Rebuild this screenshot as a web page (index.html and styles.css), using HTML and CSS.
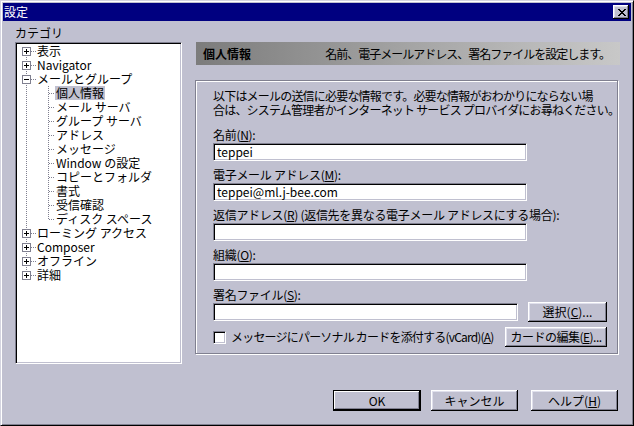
FILE: index.html
```html
<!DOCTYPE html>
<html lang="ja">
<head>
<meta charset="utf-8">
<title>設定</title>
<link rel="stylesheet" href="styles.css">
</head>
<body>
<div class="window">
  <div class="titlebar">
    <span class="title">設定</span>
    <div class="close">
      <svg width="8" height="7" viewBox="0 0 8 7" shape-rendering="crispEdges">
        <path fill="#000" d="M0 0h2v1H0zM6 0h2v1H6zM1 1h2v1H1zM5 1h2v1H5zM2 2h4v1H2zM3 3h2v1H3zM2 4h4v1H2zM1 5h2v1H1zM5 5h2v1H5zM0 6h2v1H0zM6 6h2v1H6z"/>
      </svg>
    </div>
  </div>
  <div class="body">
    <div class="main">
      <div class="left">
        <div class="cat-label">カテゴリ</div>
        <div class="tree">
          <svg class="tree-lines" width="163" height="318" viewBox="0 0 163 318" shape-rendering="crispEdges">
            <g stroke="#808090" stroke-width="1" stroke-dasharray="1 1" fill="none">
              <line x1="9.5" y1="7" x2="9.5" y2="232"/>
              <line x1="14" y1="7.5" x2="20" y2="7.5"/>
              <line x1="14" y1="21.5" x2="20" y2="21.5"/>
              <line x1="14" y1="35.5" x2="20" y2="35.5"/>
              <line x1="14" y1="189.5" x2="20" y2="189.5"/>
              <line x1="14" y1="203.5" x2="20" y2="203.5"/>
              <line x1="14" y1="217.5" x2="20" y2="217.5"/>
              <line x1="14" y1="231.5" x2="20" y2="231.5"/>
              <line x1="31.5" y1="42" x2="31.5" y2="176"/>
              <line x1="32" y1="49.5" x2="38" y2="49.5"/>
              <line x1="32" y1="63.5" x2="38" y2="63.5"/>
              <line x1="32" y1="77.5" x2="38" y2="77.5"/>
              <line x1="32" y1="91.5" x2="38" y2="91.5"/>
              <line x1="32" y1="105.5" x2="38" y2="105.5"/>
              <line x1="32" y1="119.5" x2="38" y2="119.5"/>
              <line x1="32" y1="133.5" x2="38" y2="133.5"/>
              <line x1="32" y1="147.5" x2="38" y2="147.5"/>
              <line x1="32" y1="161.5" x2="38" y2="161.5"/>
              <line x1="32" y1="175.5" x2="38" y2="175.5"/>
            </g>
          </svg>
          <div class="row"><span class="exp plus"></span><span class="label">表示</span></div>
          <div class="row"><span class="exp plus"></span><span class="label">Navigator</span></div>
          <div class="row"><span class="exp minus"></span><span class="label">メールとグループ</span></div>
          <div class="row child"><span class="label selected">個人情報</span></div>
          <div class="row child"><span class="label">メール サーバ</span></div>
          <div class="row child"><span class="label">グループ サーバ</span></div>
          <div class="row child"><span class="label">アドレス</span></div>
          <div class="row child"><span class="label">メッセージ</span></div>
          <div class="row child"><span class="label">Window の設定</span></div>
          <div class="row child"><span class="label">コピーとフォルダ</span></div>
          <div class="row child"><span class="label">書式</span></div>
          <div class="row child"><span class="label">受信確認</span></div>
          <div class="row child"><span class="label">ディスク スペース</span></div>
          <div class="row"><span class="exp plus"></span><span class="label">ローミング アクセス</span></div>
          <div class="row"><span class="exp plus"></span><span class="label">Composer</span></div>
          <div class="row"><span class="exp plus"></span><span class="label">オフライン</span></div>
          <div class="row"><span class="exp plus"></span><span class="label">詳細</span></div>
        </div>
      </div>
      <div class="right">
        <div class="header">
          <span class="header-title">個人情報</span>
          <span class="header-desc">名前、電子メールアドレス、署名ファイルを設定します。</span>
        </div>
        <div class="group">
          <div class="desc">以下はメールの送信に必要な情報です。必要な情報がおわかりにならない場<br>合は、システム管理者かインターネット サービス プロバイダにお尋ねください。</div>
          <div class="field">
            <div class="flabel">名前(<u>N</u>):</div>
            <div class="input">teppei</div>
          </div>
          <div class="field">
            <div class="flabel">電子メール アドレス(<u>M</u>):</div>
            <div class="input">teppei@ml.j-bee.com</div>
          </div>
          <div class="field">
            <div class="flabel">返信アドレス(<u>R</u>) (返信先を異なる電子メール アドレスにする場合):</div>
            <div class="input"></div>
          </div>
          <div class="field">
            <div class="flabel">組織(<u>O</u>):</div>
            <div class="input"></div>
          </div>
          <div class="field">
            <div class="flabel">署名ファイル(<u>S</u>):</div>
            <div class="input-row">
              <div class="input short"></div>
              <div class="btn btn-choose">選択(<u>C</u>)...</div>
            </div>
          </div>
          <div class="check-row">
            <span class="checkbox"></span>
            <span class="check-label">メッセージにパーソナル カードを添付する(vCard)(<u>A</u>)</span>
            <div class="btn btn-card">カードの編集(<u>E</u>)...</div>
          </div>
        </div>
      </div>
    </div>
    <div class="dlg-buttons">
      <div class="btn default btn-ok">OK</div>
      <div class="btn btn-cancel">キャンセル</div>
      <div class="btn btn-help">ヘルプ(<u>H</u>)</div>
    </div>
  </div>
</div>
</body>
</html>
```
FILE: styles.css
```css
* { box-sizing: border-box; }
html, body { margin: 0; padding: 0; }
body {
  font-family: "Noto Sans CJK JP", "Liberation Sans", sans-serif;
  font-size: 12px;
  line-height: 14px;
  color: #000;
  background: #c0c0d0;
}
u { text-decoration: underline; text-underline-offset: 1px; }

.window {
  width: 634px;
  height: 426px;
  background: #c0c0d0;
  padding: 2px;
  border: 1px solid;
  border-color: #d4d4e0 #000 #000 #d4d4e0;
  box-shadow: inset 1px 1px #fff, inset -1px -1px #808090;
}

.titlebar {
  height: 18px;
  background: #000080;
  color: #fff;
  display: flex;
  align-items: center;
  justify-content: space-between;
  padding: 0 2px 0 1px;
}
.title { line-height: 18px; }
.close {
  width: 16px;
  height: 14px;
  background: #c0c0d0;
  display: flex;
  align-items: center;
  justify-content: center;
  padding-left: 1px;
  box-shadow: inset -1px -1px #000, inset 1px 1px #fff, inset -2px -2px #808090, inset 2px 2px #e0e0ec;
}
.close svg { display: block; }

.body { padding: 4px 13px 0 12px; }
.main { display: flex; gap: 13px; align-items: flex-start; }
.left { width: 167px; flex: none; }
.cat-label { height: 17px; line-height: 14px; padding-top: 1px; }

.tree {
  position: relative;
  width: 167px;
  height: 322px;
  background: #fff;
  border: 1px solid;
  border-color: #808090 #fff #fff #808090;
  box-shadow: inset 1px 1px #000, inset -1px -1px #c0c0d0;
  padding: 1px;
}
.tree-lines { position: absolute; top: 1px; left: 1px; }
.row {
  position: relative;
  display: flex;
  align-items: flex-start;
  height: 14px;
  line-height: 14px;
  white-space: nowrap;
}
.row.child { padding-left: 38px; }
.row .label { padding: 0 1px; }
.row .label.selected { background: #c0c0d0; }
.exp {
  position: relative;
  flex: none;
  width: 9px;
  height: 9px;
  margin: 3px 5px 0 5px;
  border: 1px solid #808090;
  background: #fff;
}
.exp::before {
  content: "";
  position: absolute;
  left: 1px;
  top: 3px;
  width: 5px;
  height: 1px;
  background: #000;
}
.exp.plus::after {
  content: "";
  position: absolute;
  left: 3px;
  top: 1px;
  width: 1px;
  height: 5px;
  background: #000;
}

.right { flex: none; width: 423px; min-width: 0; padding-top: 17px; }
.header {
  height: 23px;
  margin: 0 -2px 0 1px;
  padding: 0 10px 0 7px;
  display: flex;
  align-items: center;
  justify-content: space-between;
  background: linear-gradient(90deg, #7c7c7c 0%, #a4a4a4 50%, #c8c8c8 100%);
  white-space: nowrap;
}
.header-title { font-weight: bold; }
.header-desc { letter-spacing: -1px; }

.group {
  margin-top: 15px;
  border: 1px solid #808090;
  box-shadow: inset 1px 1px #fff, 1px 1px #fff;
  padding: 8px 10px 6px 17px;
}
.desc { line-height: 14px; margin-bottom: 10px; white-space: nowrap; letter-spacing: -0.8px; }
.field { margin-bottom: 6px; }
.flabel { line-height: 16px; height: 16px; white-space: nowrap; letter-spacing: -0.3px; }
.input {
  height: 18px;
  width: 314px;
  background: #fff;
  border: 1px solid;
  border-color: #808090 #fff #fff #808090;
  box-shadow: inset 1px 1px #000, inset -1px -1px #c0c0d0;
  padding: 0 3px;
  line-height: 16px;
  white-space: nowrap;
}
.input.short { width: 305px; }
.input-row { display: flex; align-items: center; height: 18px; }

.btn {
  display: flex;
  align-items: center;
  justify-content: center;
  background: #c0c0d0;
  box-shadow: inset -1px -1px #000, inset 1px 1px #fff, inset -2px -2px #808090, inset 2px 2px #e0e0ec;
  white-space: nowrap;
  line-height: 14px;
}
.btn.default {
  box-shadow: inset 0 0 0 1px #000, inset -2px -2px #000, inset 2px 2px #fff, inset -3px -3px #808090;
}
.btn-choose { width: 79px; height: 20px; margin-left: 10px; flex: none; }

.check-row {
  margin-top: 2px;
  height: 20px;
  display: flex;
  align-items: center;
}
.checkbox {
  flex: none;
  width: 13px;
  height: 13px;
  background: #fff;
  border: 1px solid;
  border-color: #808090 #fff #fff #808090;
  box-shadow: inset 1px 1px #000, inset -1px -1px #c0c0d0;
}
.check-label { margin-left: 5px; white-space: nowrap; letter-spacing: -0.8px; }
.btn-card { width: 102px; height: 20px; margin-left: auto; flex: none; letter-spacing: -0.5px; }

.dlg-buttons {
  margin-top: 26px;
  display: flex;
  justify-content: flex-end;
}
.dlg-buttons .btn { height: 21px; }
.btn-ok { width: 88px; }
.btn-cancel { width: 87px; margin-left: 10px; }
.btn-help { width: 87px; margin-left: 13px; }
```
